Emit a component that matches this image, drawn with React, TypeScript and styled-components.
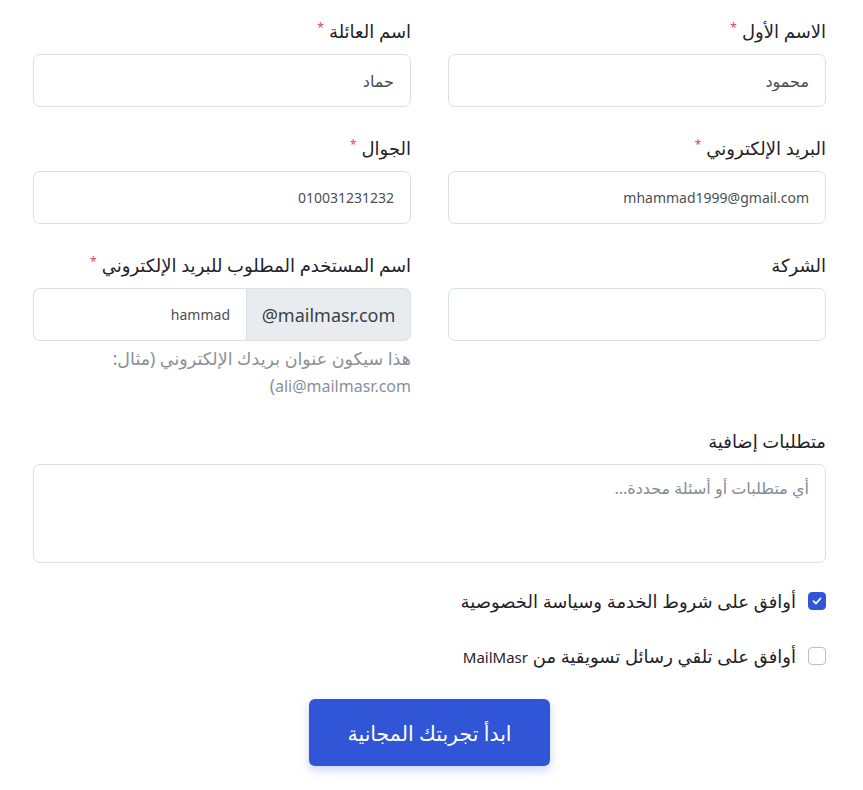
import React from "react";
import styled, { createGlobalStyle } from "styled-components";

const Global = createGlobalStyle`
  html, body { margin: 0; padding: 0; background: #fff; }
  body { font-family: "Noto Sans", "DejaVu Sans", sans-serif; color: #212529; }
  * { box-sizing: border-box; }
`;

const Form = styled.form`
  direction: rtl;
  width: 863px;
  padding: 19px 37px 24px 33px;
  display: flex;
  flex-direction: column;
`;

const Grid = styled.div`
  display: grid;
  grid-template-columns: 378px 378px;
  column-gap: 37px;
  row-gap: 29px;
`;

const Field = styled.div<{ $full?: boolean }>`
  display: flex;
  flex-direction: column;
  grid-column: ${(p) => (p.$full ? "1 / -1" : "auto")};
`;

const Label = styled.label`
  font-size: 18px;
  line-height: 24px;
  height: 24px;
  margin-bottom: 11px;
  color: #1f2329;
  display: flex;
  align-items: center;
  gap: 5px;
`;

const Star = styled.span`
  color: #e8455b;
  font-size: 12px;
  line-height: 1;
  margin-top: -6px;
`;

const Input = styled.input<{ $ar?: boolean }>`
  height: 53px;
  width: 100%;
  border: 1px solid #dcdfe4;
  border-radius: 7px;
  padding: 0 16px;
  font-family: inherit;
  font-size: ${(p) => (p.$ar ? "16px" : "14px")};
  color: #4a4f57;
  background: #fff;
  outline: none;
  direction: rtl;
`;

const Group = styled.div`
  display: flex;
  height: 53px;
  direction: rtl;
`;

const Addon = styled.div`
  width: 165px;
  flex: none;
  background: #e9ecef;
  border: 1px solid #dcdfe4;
  border-radius: 0 7px 7px 0;
  display: flex;
  align-items: center;
  justify-content: center;
  font-size: 18px;
  color: #3a3f47;
  direction: ltr;
`;

const GroupInput = styled(Input)`
  flex: 1;
  border-radius: 7px 0 0 7px;
  border-right: none;
`;

const Help = styled.div`
  margin-top: 4px;
  font-size: 17.5px;
  line-height: 27px;
  color: #8b9098;
`;

const HelpLatin = styled.span`
  font-size: 16px;
`;

const TextArea = styled.textarea`
  height: 99px;
  width: 100%;
  resize: none;
  border: 1px solid #dcdfe4;
  border-radius: 7px;
  padding: 11px 16px;
  font-family: inherit;
  font-size: 16px;
  line-height: 24px;
  color: #4a4f57;
  outline: none;
  &::placeholder { color: #858b94; }
`;

const Checks = styled.div`
  margin-top: 26px;
  display: flex;
  flex-direction: column;
  gap: 31px;
`;

const CheckRow = styled.label`
  display: flex;
  align-items: center;
  gap: 12px;
  height: 24px;
  font-size: 18px;
  color: #1f2329;
`;

const CheckText = styled.span`
  white-space: nowrap;
`;

const Box = styled.span<{ $on?: boolean }>`
  width: 18px;
  height: 18px;
  flex: none;
  border-radius: 4px;
  border: 1px solid ${(p) => (p.$on ? "#3055d6" : "#b9bec6")};
  background: ${(p) => (p.$on ? "#3055d6" : "#fff")};
  display: flex;
  align-items: center;
  justify-content: center;
`;

const Latin = styled.span`
  font-size: 15px;
`;

const ButtonRow = styled.div`
  margin-top: 31px;
  display: flex;
  justify-content: center;
`;

const Button = styled.button`
  width: 241px;
  height: 67px;
  border: none;
  border-radius: 6px;
  background: #3055d6;
  color: #fff;
  font-family: inherit;
  font-size: 20.5px;
  box-shadow: 0 4px 10px rgba(48, 85, 214, 0.25);
  cursor: pointer;
`;

const Req = () => <Star>*</Star>;

export default function App() {
  return (
    <>
      <Global />
      <Form dir="rtl" onSubmit={(e) => e.preventDefault()}>
        <Grid>
          <Field>
            <Label>الاسم الأول <Req /></Label>
            <Input $ar defaultValue="محمود" />
          </Field>
          <Field>
            <Label>اسم العائلة <Req /></Label>
            <Input $ar defaultValue="حماد" />
          </Field>
          <Field>
            <Label>البريد الإلكتروني <Req /></Label>
            <Input defaultValue="mhammad1999@gmail.com" />
          </Field>
          <Field>
            <Label>الجوال <Req /></Label>
            <Input defaultValue="010031231232" />
          </Field>
          <Field>
            <Label>الشركة</Label>
            <Input />
          </Field>
          <Field>
            <Label>اسم المستخدم المطلوب للبريد الإلكتروني <Req /></Label>
            <Group>
              <Addon>@mailmasr.com</Addon>
              <GroupInput defaultValue="hammad" />
            </Group>
            <Help>
              هذا سيكون عنوان بريدك الإلكتروني (مثال: <HelpLatin>ali@mailmasr.com</HelpLatin>)
            </Help>
          </Field>
          <Field $full>
            <Label>متطلبات إضافية</Label>
            <TextArea placeholder="أي متطلبات أو أسئلة محددة..." />
          </Field>
        </Grid>
        <Checks>
          <CheckRow>
            <Box $on>
              <svg width="10" height="8" viewBox="0 0 10 8">
                <path d="M1.5 4.2 L4 6.5 L8.5 1.5" stroke="#fff" strokeWidth="1.8" fill="none" strokeLinecap="round" strokeLinejoin="round" />
              </svg>
            </Box>
            <CheckText>أوافق على شروط الخدمة وسياسة الخصوصية</CheckText>
          </CheckRow>
          <CheckRow>
            <Box />
            <CheckText>
              أوافق على تلقي رسائل تسويقية من <Latin>MailMasr</Latin>
            </CheckText>
          </CheckRow>
        </Checks>
        <ButtonRow>
          <Button type="submit">ابدأ تجربتك المجانية</Button>
        </ButtonRow>
      </Form>
    </>
  );
}
